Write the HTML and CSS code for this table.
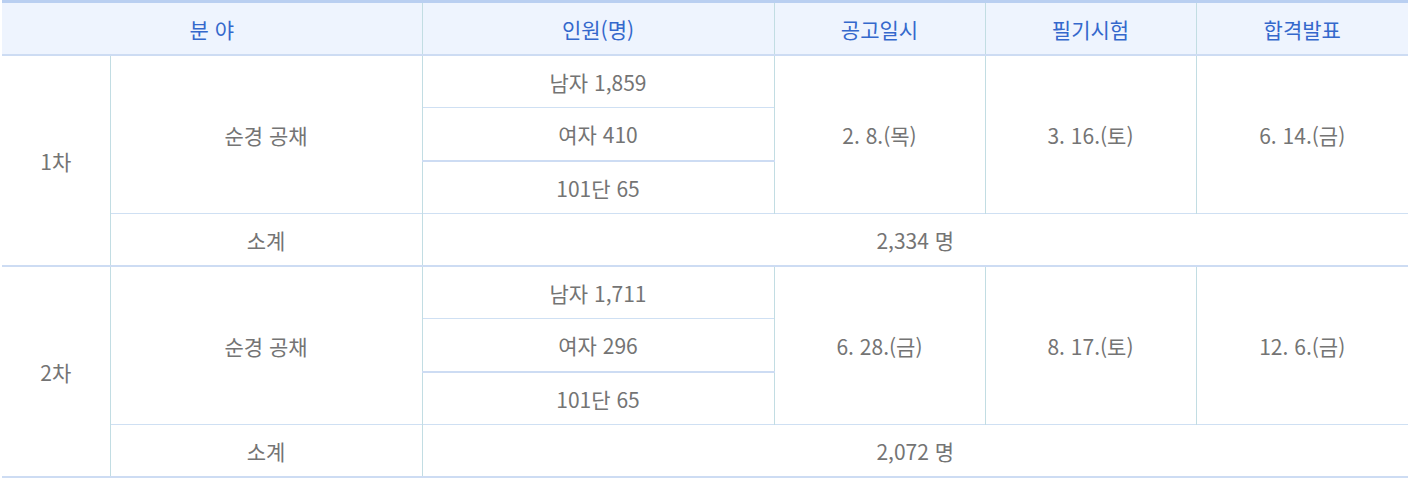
FILE: index.html
```html
<!DOCTYPE html>
<html lang="ko">
<head>
<meta charset="utf-8">
<link rel="stylesheet" href="styles.css">
</head>
<body>
<div class="wrap">
<table class="sched">
  <colgroup>
    <col class="c1"><col class="c2"><col class="c3"><col class="c4"><col class="c5"><col class="c6">
  </colgroup>
  <thead>
    <tr>
      <th colspan="2">분 야</th>
      <th>인원(명)</th>
      <th>공고일시</th>
      <th>필기시험</th>
      <th>합격발표</th>
    </tr>
  </thead>
  <tbody class="group">
    <tr>
      <td rowspan="4" class="round">1차</td>
      <td rowspan="3">순경 공채</td>
      <td>남자 1,859</td>
      <td rowspan="3">2. 8.(목)</td>
      <td rowspan="3">3. 16.(토)</td>
      <td rowspan="3">6. 14.(금)</td>
    </tr>
    <tr class="tall"><td>여자 410</td></tr>
    <tr><td class="thick">101단 65</td></tr>
    <tr><td>소계</td><td colspan="4">2,334 명</td></tr>
  </tbody>
  <tbody class="group">
    <tr>
      <td rowspan="4" class="round">2차</td>
      <td rowspan="3">순경 공채</td>
      <td>남자 1,711</td>
      <td rowspan="3">6. 28.(금)</td>
      <td rowspan="3">8. 17.(토)</td>
      <td rowspan="3">12. 6.(금)</td>
    </tr>
    <tr class="tall"><td>여자 296</td></tr>
    <tr><td class="thick">101단 65</td></tr>
    <tr><td>소계</td><td colspan="4">2,072 명</td></tr>
  </tbody>
</table>
</div>
</body>
</html>
```

FILE: styles.css
```css
html, body {
  margin: 0;
  padding: 0;
  background: #fff;
}
.wrap {
  padding: 0 2px;
}
.sched {
  width: 1406px;
  table-layout: fixed;
  border-collapse: collapse;
  font-family: "Noto Sans CJK KR", "Noto Sans", sans-serif;
  font-size: 21px;
  color: #747474;
}
.c1 { width: 108px; }
.c2 { width: 312px; }
.c3 { width: 352px; }
.c4 { width: 211px; }
.c5 { width: 211px; }
.c6 { width: 212px; }

.sched th {
  height: 51px;
  padding: 0;
  background: #eef4fe;
  color: #3468cc;
  font-weight: normal;
  border-top: 3px solid #b9cff1;
  border-bottom: 2px solid #cddcf3;
  border-left: 1px solid #c2dde3;
  text-align: center;
  vertical-align: middle;
}
.sched th:first-child {
  border-left: none;
}
.sched td {
  height: 51px;
  padding: 0;
  text-align: center;
  vertical-align: middle;
  border-top: 1px solid #cfe0f3;
  border-left: 1px solid #c2dde3;
}
.sched tr.tall td {
  height: 52px;
}
.sched td.round {
  border-left: none;
}
.sched td.thick {
  border-top: 2px solid #cddcf3;
}
.sched tbody.group {
  border-bottom: 2px solid #cddcf3;
}
```
